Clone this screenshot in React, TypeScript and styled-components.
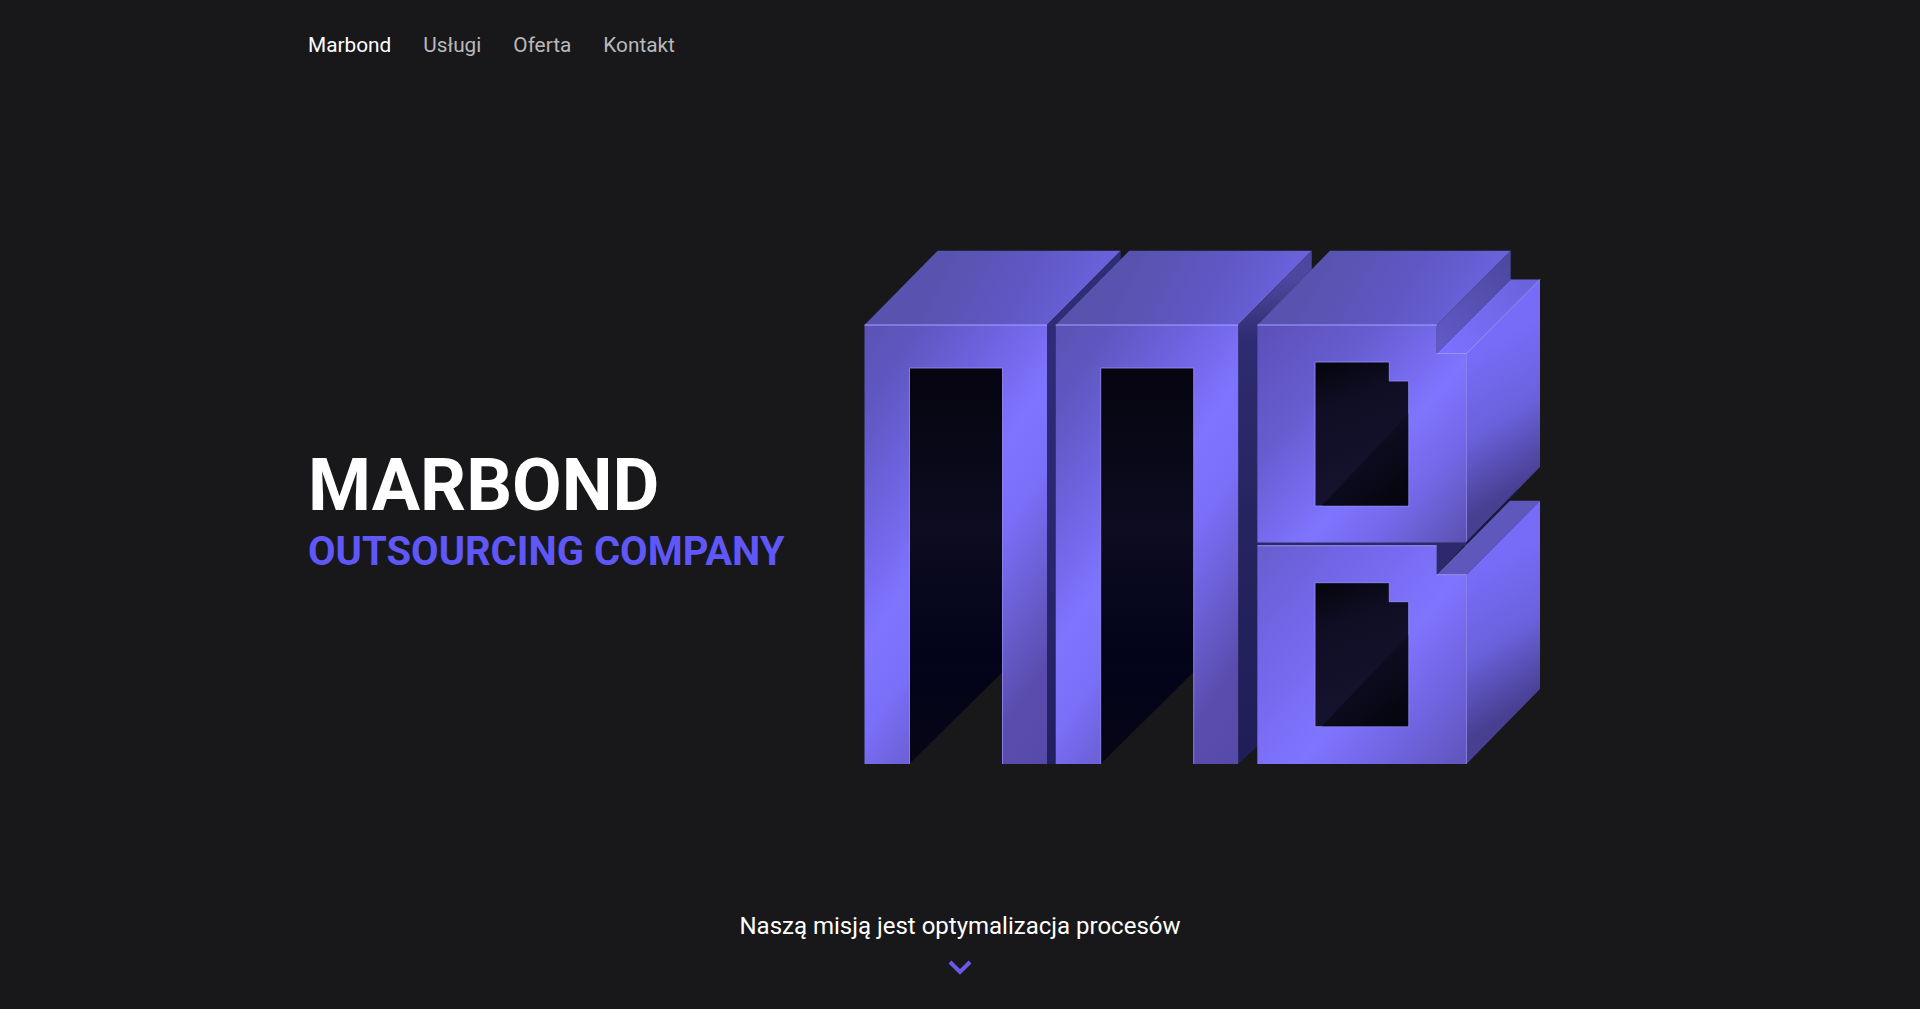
import * as React from "react";
import styled, { createGlobalStyle } from "styled-components";

const GlobalStyle = createGlobalStyle`
  html, body {
    margin: 0;
    background: #18181a;
    color: #fff;
    font-family: Roboto, "Liberation Sans", sans-serif;
  }
`;

const Page = styled.div`
  display: flex;
  flex-direction: column;
  height: 100vh;
  overflow: hidden;
`;

const Nav = styled.nav`
  display: flex;
  gap: 32px;
  height: 90px;
  align-items: center;
  padding-left: 308px;
`;

const NavLink = styled.a<{ $active?: boolean }>`
  font-size: 20.8px;
  color: ${(p) => (p.$active ? "#fff" : "#b9b9bd")};
  text-decoration: none;
`;

const Hero = styled.section`
  display: flex;
  align-items: center;
  padding-top: 156px;
  padding-left: 308px;
`;

const HeroText = styled.div`
  width: 552px;
  flex-shrink: 0;
  padding-top: 7px;
`;

const Title = styled.h1`
  margin: 0 0 2px;
  font-size: 72px;
  line-height: 80px;
  font-weight: 700;
  color: #fff;
`;

const Subtitle = styled.h2`
  margin: 0;
  font-size: 40px;
  line-height: 48px;
  font-weight: 700;
  color: #5f57f8;
`;

const Mission = styled.footer`
  margin-top: auto;
  display: flex;
  flex-direction: column;
  align-items: center;
  gap: 17px;
  padding-bottom: 34px;
  font-size: 24px;
  line-height: 32px;
`;

const Chevron = styled.svg`
  width: 24px;
  height: 16px;
  display: block;
`;

const LogoSvg = styled.svg`
  width: 684px;
  height: 522px;
  flex-shrink: 0;
  display: block;
`;

type Stops = [number, string][];

const Grad = ({
  id,
  from,
  to,
  stops,
}: {
  id: string;
  from: [number, number];
  to: [number, number];
  stops: Stops;
}) => (
  <linearGradient
    id={id}
    gradientUnits="userSpaceOnUse"
    x1={from[0]}
    y1={from[1]}
    x2={to[0]}
    y2={to[1]}
  >
    {stops.map(([o, c]) => (
      <stop key={o} offset={o} stopColor={c} />
    ))}
  </linearGradient>
);

const mFront: Stops = [
  [0, "#5a53b4"],
  [0.12, "#5f57c0"],
  [0.3, "#6f64e2"],
  [0.46, "#7f74ff"],
  [0.58, "#7a6ff8"],
  [0.72, "#6a5fd2"],
  [0.86, "#5a4cae"],
  [1, "#564aa8"],
];
const mTop: Stops = [
  [0, "#5953b0"],
  [0.5, "#5f58c4"],
  [1, "#6b64e0"],
];
const holeM: Stops = [
  [0, "#05040f"],
  [0.4, "#0d0c20"],
  [0.72, "#03031a"],
  [1, "#060616"],
];
const holeB: Stops = [
  [0, "#06060f"],
  [0.35, "#100e25"],
  [1, "#14122c"],
];
const holeBDark: Stops = [
  [0, "#0e0d22"],
  [1, "#05050f"],
];

const legs = (x: number, w: number, hole: number) => ({
  front: `${x},325 ${x + w},325 ${x + w},764 ${x + hole + 93},764 ${x + hole + 93},368 ${x + hole},368 ${x + hole},764 ${x},764`,
  hole: `${x + hole},368 ${x + hole + 93},368 ${x + hole + 93},672 ${x + hole},764`,
  edge: `${x + hole},764 ${x + hole},368 ${x + hole + 93},368 ${x + hole + 93},764`,
});

const m1 = legs(864.5, 182.5, 45);
const m2 = legs(1055.7, 182.5, 45);

// B front faces, cut by the step on the upper right
const bFront = (top: number, step: number, bottom: number) =>
  `1257.3,${top} 1436.7,${top} 1436.7,${step} 1466.5,${step} 1466.5,${bottom} 1257.3,${bottom}`;

const bHole = (top: number) => ({
  outline: `1315,${top} 1389.3,${top} 1389.3,${top + 19} 1408.7,${top + 19} 1408.7,${top + 144} 1315,${top + 144}`,
  dark: `1408.2,${top + 52} 1408.2,${top + 143.5} 1322,${top + 143.5}`,
});

const upperHole = bHole(362);
const lowerHole = bHole(582.7);

function Logo() {
  return (
    <LogoSvg viewBox="860 246 684 522" aria-label="Marbond logo">
      <defs>
        <Grad id="m1f" from={[864, 325]} to={[1193, 549]} stops={mFront} />
        <Grad id="m2f" from={[1055, 325]} to={[1384, 549]} stops={mFront} />
        <Grad id="m1t" from={[950, 260]} to={[1090, 330]} stops={mTop} />
        <Grad id="m2t" from={[1140, 260]} to={[1280, 330]} stops={mTop} />
        <Grad id="m3t" from={[1330, 260]} to={[1470, 340]} stops={mTop} />
        <Grad id="hole1" from={[955, 368]} to={[955, 764]} stops={holeM} />
        <Grad
          id="strip"
          from={[1248, 280]}
          to={[1248, 760]}
          stops={[
            [0, "#4c489f"],
            [0.12, "#2e2c72"],
            [0.5, "#26245f"],
            [1, "#201e58"],
          ]}
        />
        <Grad
          id="strip1"
          from={[1051, 325]}
          to={[1051, 764]}
          stops={[
            [0, "#2f2d78"],
            [1, "#232060"],
          ]}
        />
        <Grad
          id="b1f"
          from={[1257, 325]}
          to={[1482, 523]}
          stops={[
            [0, "#5b50b8"],
            [0.3, "#675dd0"],
            [0.6, "#7f74ff"],
            [0.78, "#7268e6"],
            [1, "#5a52b0"],
          ]}
        />
        <Grad
          id="b2f"
          from={[1240, 540]}
          to={[1482, 745]}
          stops={[
            [0, "#665cc8"],
            [0.3, "#7267e8"],
            [0.6, "#7f74ff"],
            [0.8, "#7064e0"],
            [1, "#5f55ba"],
          ]}
        />
        <Grad
          id="b1s"
          from={[1478, 352]}
          to={[1550, 470]}
          stops={[
            [0, "#766cf8"],
            [0.5, "#6a62dc"],
            [1, "#473f90"],
          ]}
        />
        <Grad
          id="b2s"
          from={[1478, 572]}
          to={[1550, 690]}
          stops={[
            [0, "#766cf8"],
            [0.5, "#6a62dc"],
            [1, "#473f90"],
          ]}
        />
        <Grad
          id="stepback"
          from={[1440, 350]}
          to={[1510, 260]}
          stops={[
            [0, "#625ac8"],
            [1, "#4c489e"],
          ]}
        />
        <Grad
          id="steptop"
          from={[1450, 350]}
          to={[1530, 285]}
          stops={[
            [0, "#7b70ff"],
            [1, "#6a63dc"],
          ]}
        />
        <Grad id="holeB" from={[1330, 365]} to={[1370, 470]} stops={holeB} />
        <Grad id="holeB2" from={[1330, 586]} to={[1370, 690]} stops={holeB} />
        <Grad id="holeBd" from={[1360, 450]} to={[1400, 500]} stops={holeBDark} />
        <Grad id="holeBd2" from={[1360, 670]} to={[1400, 720]} stops={holeBDark} />
      </defs>

      {/* first M */}
      <polygon points="864.5,325 937.7,250.7 1120.7,250.7 1047,325" fill="url(#m1t)" />
      <polygon points="1047,325 1120.7,250.7 1120.7,259.5 1055.7,325 1055.7,764 1047,764" fill="url(#strip1)" />
      <polygon points={m1.hole} fill="url(#hole1)" />
      <polygon points={m1.front} fill="url(#m1f)" />
      <polyline points={m1.edge} fill="none" stroke="#9a92ff" strokeOpacity="0.8" />
      <line x1="864.5" y1="325" x2="1047" y2="325" stroke="#aaa2ff" />

      {/* second M */}
      <polygon points="1055.7,325 1129.3,250.7 1311.7,250.7 1238.2,325" fill="url(#m2t)" />
      <polygon points="1238.2,325 1311.7,250.7 1311.7,269.6 1257.3,325 1257.3,746 1238.2,764" fill="url(#strip)" />
      <polygon points={m2.hole} fill="url(#hole1)" />
      <polygon points={m2.front} fill="url(#m2f)" />
      <polyline points={m2.edge} fill="none" stroke="#9a92ff" strokeOpacity="0.8" />
      <line x1="1055.7" y1="325" x2="1238.2" y2="325" stroke="#aaa2ff" />

      {/* upper part of B */}
      <polygon points="1257.3,325 1330,250.7 1510.7,250.7 1436.7,325" fill="url(#m3t)" />
      <polygon points="1436.7,325 1510.7,250.7 1510.7,279.5 1436.7,353.5" fill="url(#stepback)" />
      <polygon points="1436.7,353.5 1510.7,279.5 1540,279.5 1466.5,353.5" fill="url(#steptop)" />
      <polygon points="1466.5,353.5 1540,279.5 1540,467 1466.5,542" fill="url(#b1s)" />
      <polygon points={bFront(325, 353.5, 542.7)} fill="url(#b1f)" />
      <polygon points={upperHole.outline} fill="url(#holeB)" stroke="#9a92ff" strokeOpacity="0.8" />
      <polygon points={upperHole.dark} fill="url(#holeBd)" />
      <polyline points="1257.3,325 1436.7,325" fill="none" stroke="#aaa2ff" />
      <polyline points="1436.7,353.5 1466.5,353.5 1540,279.5" fill="none" stroke="#aaa2ff" strokeOpacity="0.8" />
      <line x1="1466.5" y1="353.5" x2="1466.5" y2="542" stroke="#9a92ff" strokeOpacity="0.7" />

      {/* seam between the two parts */}
      <polygon points="1257.3,542.7 1466.5,542.7 1466.5,545.7 1257.3,545.7" fill="#2c2a6c" />
      <line x1="1466.5" y1="542.7" x2="1518" y2="490" stroke="#1c1a50" strokeWidth="1.5" />

      {/* lower part of B */}
      <polygon points="1436.7,545.7 1466.5,542.7 1436.7,574.7" fill="#2c2a6c" />
      <polygon points="1436.7,574.7 1510,500.7 1540,500.7 1466.5,574.7" fill="#5f58bc" />
      <polygon points="1466.5,574.7 1540,500.7 1540,689 1466.5,764" fill="url(#b2s)" />
      <polygon points={bFront(545.7, 574.7, 764)} fill="url(#b2f)" />
      <polygon points={lowerHole.outline} fill="url(#holeB2)" stroke="#9a92ff" strokeOpacity="0.8" />
      <polygon points={lowerHole.dark} fill="url(#holeBd2)" />
      <polyline points="1257.3,545.7 1436.7,545.7" fill="none" stroke="#aaa2ff" strokeOpacity="0.85" />
      <polyline points="1436.7,574.7 1466.5,574.7" fill="none" stroke="#aaa2ff" strokeOpacity="0.8" />
      <line x1="1466.5" y1="574.7" x2="1466.5" y2="764" stroke="#9a92ff" strokeOpacity="0.7" />
    </LogoSvg>
  );
}

export default function App() {
  return (
    <Page>
      <GlobalStyle />
      <Nav>
        <NavLink $active href="#marbond">Marbond</NavLink>
        <NavLink href="#uslugi">Usługi</NavLink>
        <NavLink href="#oferta">Oferta</NavLink>
        <NavLink href="#kontakt">Kontakt</NavLink>
      </Nav>
      <Hero>
        <HeroText>
          <Title>MARBOND</Title>
          <Subtitle>OUTSOURCING COMPANY</Subtitle>
        </HeroText>
        <Logo />
      </Hero>
      <Mission>
        <span>Naszą misją jest optymalizacja procesów</span>
        <Chevron viewBox="0 0 24 16">
          <path d="M2 3 L12 13 L22 3" fill="none" stroke="#6a5ae8" strokeWidth="4" />
        </Chevron>
      </Mission>
    </Page>
  );
}
